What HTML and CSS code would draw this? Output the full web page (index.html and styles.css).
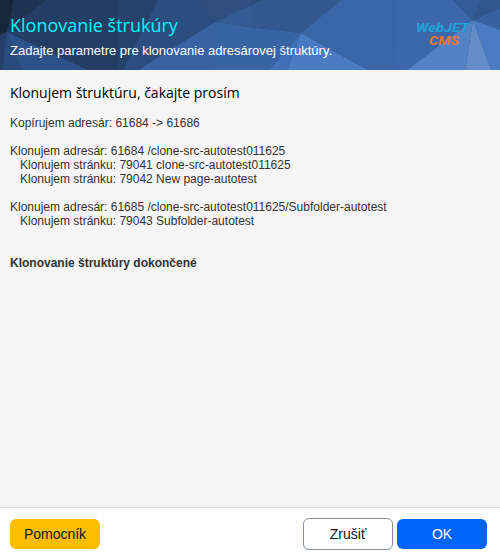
FILE: index.html
```
<!DOCTYPE html>
<html lang="sk">
<head>
<meta charset="utf-8">
<title>Klonovanie štrukúry</title>
<link rel="stylesheet" href="styles.css">
</head>
<body>
<header class="header">
  <svg class="facets" viewBox="0 0 500 70" aria-hidden="true">
    <rect width="500" height="70" fill="#26436d"/>
    <path fill="#18263b" d="M0 0H14L7 32L0 35Z"/>
    <path fill="#1f3352" d="M14 0H46L7 32Z"/>
    <path fill="#253f68" d="M0 35L7 32L2 70H0Z"/>
    <path fill="#294a7c" d="M7 32L22 70H2Z"/>
    <path fill="#2d5189" d="M7 32L88 70H22Z"/>
    <path fill="#243d64" d="M46 0H118L117 70H88L7 32Z"/>
    <path fill="#2c4d7f" d="M158 0H196L215 22L138 70H123Z"/>
    <path fill="#2e4f80" d="M196 0H251V5L215 22Z"/>
    <path fill="#345b94" d="M251 5V27L215 22Z"/>
    <path fill="#3862a1" d="M215 22L138 70H213Z"/>
    <path fill="#3964a4" d="M215 22L250 27L301 33L269 70H212Z"/>
    <path fill="#33588f" d="M250 5L262 0H341L301 33L250 27Z"/>
    <path fill="#2d4b79" d="M250 0H262L250 5Z"/>
    <path fill="#4170b8" d="M301 33L287 70H269Z"/>
    <path fill="#4a7ac2" d="M301 33L368 70H287Z"/>
    <path fill="#3a66a7" d="M341 0H399L394 70H368L301 33Z"/>
    <path fill="#3c68ab" d="M398 0H453L473 20L407 70H393Z"/>
    <path fill="#345d98" d="M453 0H481L473 20Z"/>
    <path fill="#31568c" d="M481 0H500V8L473 20Z"/>
    <path fill="#3660a0" d="M500 8V30L473 20Z"/>
    <path fill="#4b7bc2" d="M473 20L500 30V70H491Z"/>
    <path fill="#648cc8" d="M473 20L491 70H465Z"/>
    <path fill="#5582c7" d="M473 20L465 70H407Z"/>
  </svg>
  <div class="heading">
    <h1 class="title">Klonovanie štrukúry</h1>
    <p class="subtitle">Zadajte parametre pre klonovanie adresárovej štruktúry.</p>
  </div>
  <svg class="logo" viewBox="0 0 60 30">
    <text class="logo-web" x="2" y="11.5" textLength="53" lengthAdjust="spacingAndGlyphs">WebJET</text>
    <text class="logo-cms" x="15" y="24.5" textLength="30" lengthAdjust="spacingAndGlyphs">CMS</text>
  </svg>
</header>
<main class="content">
  <h2 class="status">Klonujem štruktúru, čakajte prosím</h2>
  <p class="log">Kopírujem adresár: 61684 -&gt; 61686</p>
  <div class="group">
    <p class="log">Klonujem adresár: 61684 /clone-src-autotest011625</p>
    <p class="log page">Klonujem stránku: 79041 clone-src-autotest011625</p>
    <p class="log page">Klonujem stránku: 79042 New page-autotest</p>
  </div>
  <div class="group">
    <p class="log">Klonujem adresár: 61685 /clone-src-autotest011625/Subfolder-autotest</p>
    <p class="log page">Klonujem stránku: 79043 Subfolder-autotest</p>
  </div>
  <p class="log done">Klonovanie štruktúry dokončené</p>
</main>
<footer class="footer">
  <button class="btn help">Pomocník</button>
  <button class="btn cancel">Zrušiť</button>
  <button class="btn ok">OK</button>
</footer>
</body>
</html>
```
FILE: styles.css
```
* { box-sizing: border-box; }
body {
  margin: 0;
  height: 560px;
  display: flex;
  flex-direction: column;
  overflow: hidden;
  background: #f5f5f5;
  color: #333;
  font-family: "Liberation Sans", Arial, sans-serif;
}
.header {
  position: relative;
  height: 70px;
  display: flex;
  justify-content: space-between;
  padding: 0 26px 0 10px;
}
.facets { position: absolute; inset: 0; width: 500px; height: 70px; }
.heading, .logo { position: relative; }
.title {
  margin: 13px 0 0;
  font: 400 18px/25px "Open Sans", sans-serif;
  color: #00f5f5;
}
.subtitle { margin: 5px 0 0; font-size: 13px; line-height: 16px; color: #fff; }
.logo { width: 60px; height: 30px; margin-top: 20px; }
.logo text { font-family: Roboto, sans-serif; font-weight: bold; font-style: italic; }
.logo-web { font-size: 12px; fill: #21a5d8; }
.logo-cms { font-size: 12px; fill: #e8782a; }
.content { flex: 1; padding: 13px 10px; }
.status {
  margin: 0 0 13px;
  font: 400 14px/20px "Open Sans", sans-serif;
  color: #000;
}
.log { margin: 0; font-size: 12px; line-height: 14px; }
.log.page { padding-left: 10px; }
.group { margin-top: 14px; }
.log.done { margin-top: 28px; font-weight: bold; }
.footer {
  height: 53px;
  display: flex;
  align-items: center;
  gap: 4px;
  padding: 0 13px 0 10px;
  background: #fff;
  border-top: 1px solid #d5d5d5;
}
.btn {
  width: 90px;
  height: 30px;
  padding: 0;
  border: 0;
  border-radius: 6px;
  font: 14px "Liberation Sans", Arial, sans-serif;
}
.help { margin-right: auto; background: #fabd00; color: #13151b; }
.cancel { height: 32px; background: #fff; border: 1px solid #868ea5; color: #13151b; }
.ok { background: #0063fb; color: #fff; }
```
